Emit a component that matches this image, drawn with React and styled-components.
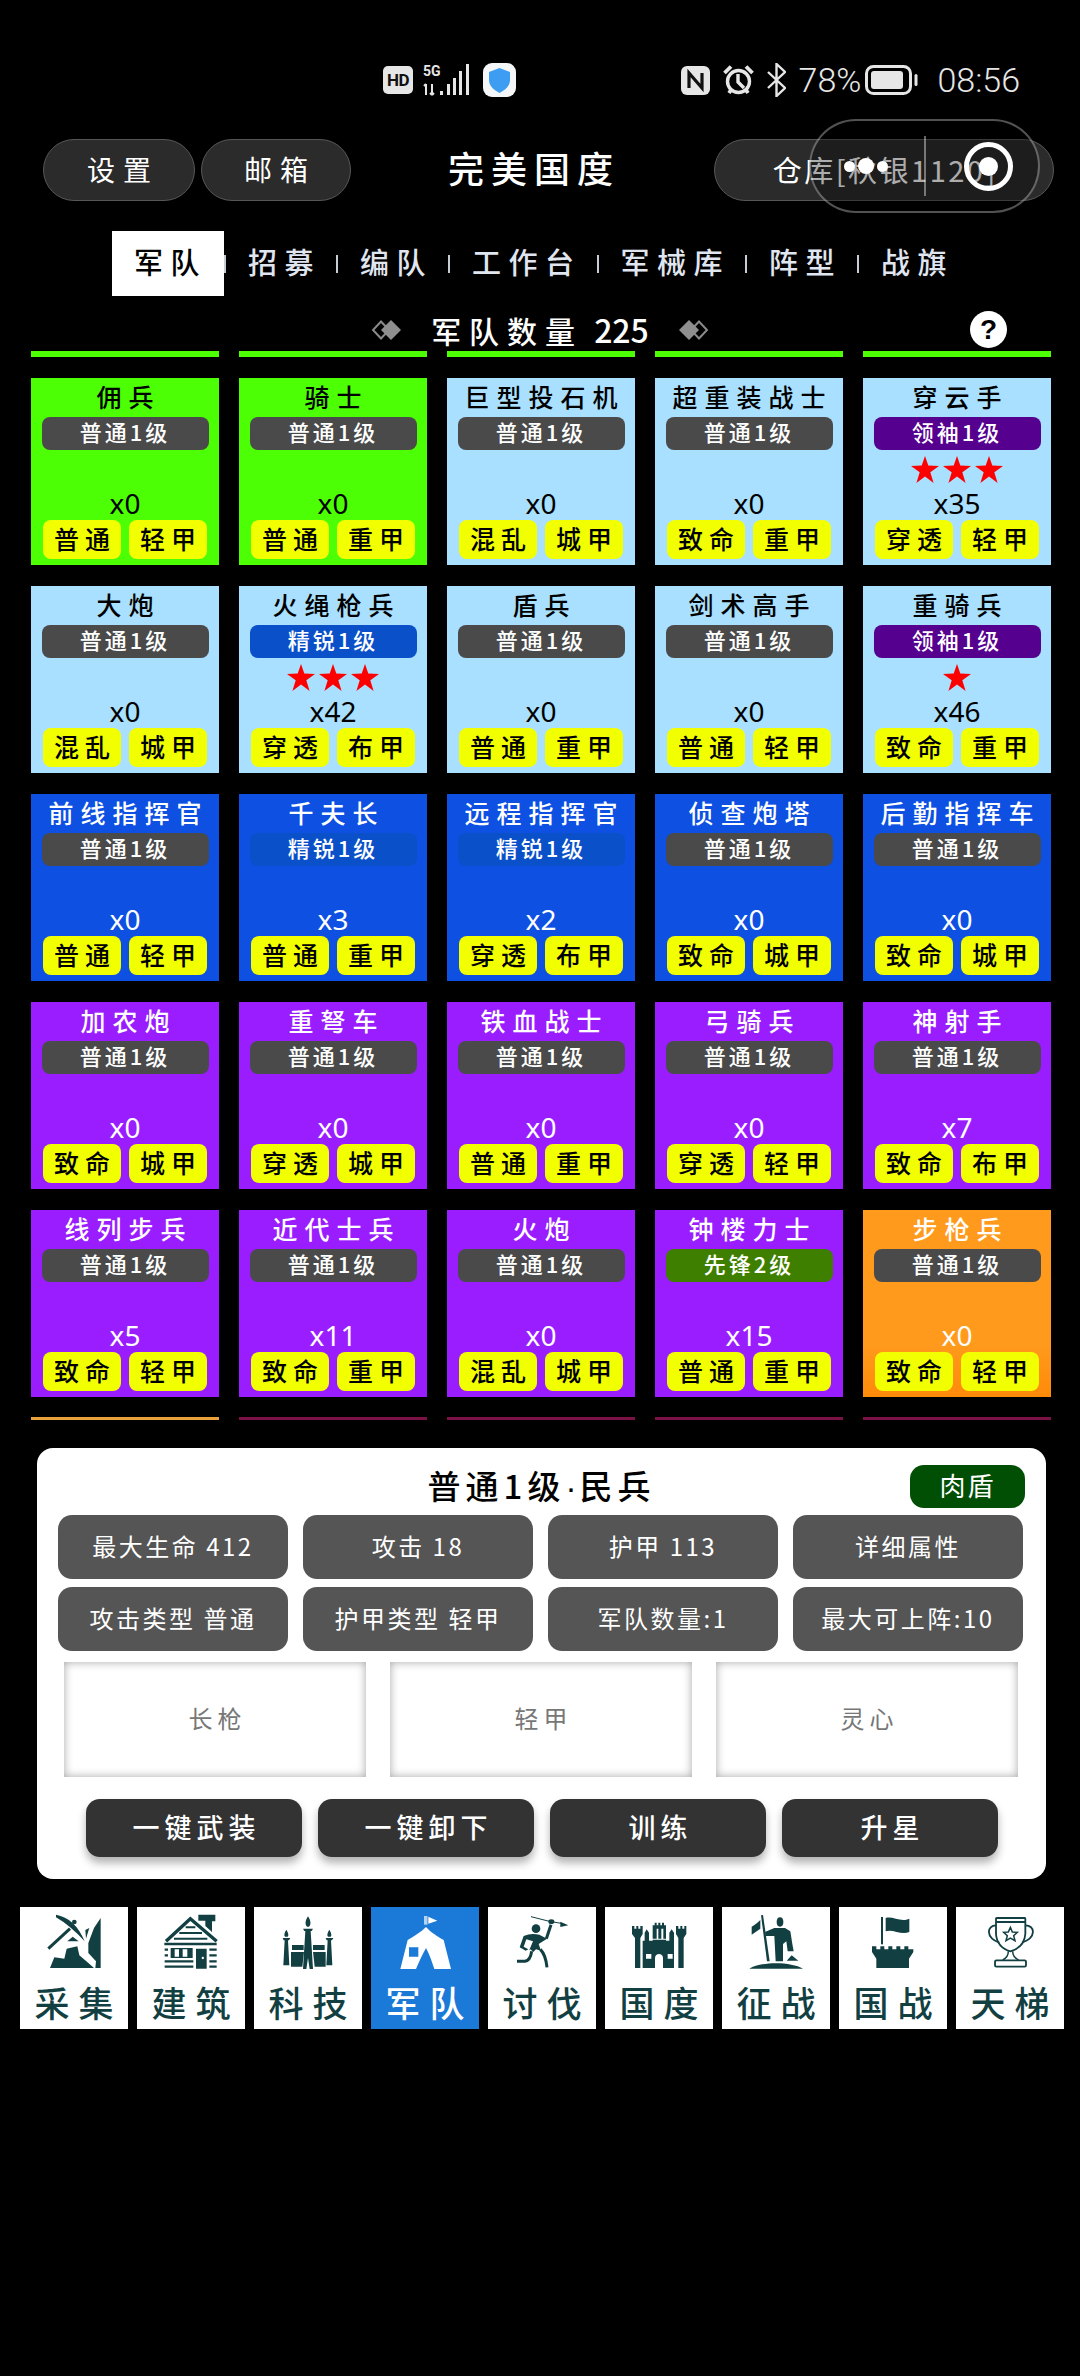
import React from 'react';
import styled, { createGlobalStyle } from 'styled-components';

const GlobalStyle = createGlobalStyle`
  html, body {
    margin: 0;
    padding: 0;
    background: #000;
  }
  body {
    font-family: "Noto Sans CJK SC", "Noto Sans", sans-serif;
    color: #fff;
  }
  * { box-sizing: border-box; }
`;

const Page = styled.div`
  position: relative;
  width: 1080px;
  height: 2376px;
  padding-top: 60px;
  overflow: hidden;
  background: #000;
`;

/* ---------- status bar ---------- */

const StatusBar = styled.div`
  display: flex;
  align-items: center;
  justify-content: space-between;
  height: 40px;
  padding: 0 60px 0 383px;
  color: #e6e6e6;
`;

const StatusGroup = styled.div`
  display: flex;
  align-items: center;
  gap: ${(p) => p.$gap || 10}px;
`;

const HdBadge = styled.span`
  display: flex;
  align-items: center;
  justify-content: center;
  width: 30px;
  height: 28px;
  border-radius: 5px;
  background: #e6e6e6;
  color: #111;
  font-family: Roboto, sans-serif;
  font-size: 17px;
  font-weight: 700;
  letter-spacing: -0.5px;
`;

const StatusText = styled.span`
  font-family: Roboto, sans-serif;
  font-size: 34px;
  line-height: 40px;
  font-weight: 300;
  margin-left: ${(p) => p.$shift || 0}px;
`;

const BatteryIcon = styled.svg`
  margin-left: -9px;
`;

/* ---------- header ---------- */

const Header = styled.div`
  display: flex;
  align-items: center;
  margin-top: 39px;
  padding: 0 26px 0 43px;
  gap: 6px;
`;

const PillButton = styled.div`
  display: flex;
  align-items: center;
  justify-content: center;
  width: ${(p) => p.$width}px;
  height: 62px;
  padding: 0 0 3px ${(p) => p.$spacing ?? 8}px;
  border-radius: 31px;
  background: #2b2b2b;
  border: 1.5px solid #575757;
  font-size: ${(p) => p.$size || 28}px;
  letter-spacing: ${(p) => p.$spacing ?? 8}px;
  white-space: nowrap;
`;

const GameTitle = styled.div`
  margin: 0 0 7px 91px;
  font-size: 36px;
  font-weight: 500;
  letter-spacing: 7px;
  white-space: nowrap;
`;

const HeaderSpacer = styled.div`
  flex: 1;
`;

/* floating assistant capsule that sits above the app */
const FloatCapsule = styled.div`
  position: absolute;
  left: 809px;
  top: 119px;
  width: 231px;
  height: 94px;
  border-radius: 47px;
  background: rgba(0, 0, 0, 0.32);
  border: 2.5px solid rgba(255, 255, 255, 0.32);
  display: flex;
  align-items: center;
`;

const CapsuleDots = styled.div`
  width: 113px;
  display: flex;
  align-items: center;
  justify-content: center;
  gap: 3px;
  padding-right: 4px;
`;

const CapsuleDot = styled.i`
  display: block;
  width: ${(p) => p.$size}px;
  height: ${(p) => p.$size}px;
  border-radius: 50%;
  background: #fff;
`;

const CapsuleDivider = styled.div`
  width: 2px;
  height: 60px;
  background: rgba(255, 255, 255, 0.4);
`;

const CapsuleRing = styled.div`
  margin-left: 38px;
  width: 49px;
  height: 49px;
  border-radius: 50%;
  border: 5px solid #fff;
  display: flex;
  align-items: center;
  justify-content: center;
  &::before {
    content: '';
    width: 19px;
    height: 19px;
    border-radius: 50%;
    background: #fff;
  }
`;

/* ---------- tabs ---------- */

const TabRow = styled.div`
  display: flex;
  align-items: center;
  margin-top: 30px;
  padding-left: 112px;
  height: 65px;
`;

const Tab = styled.div`
  display: flex;
  align-items: center;
  height: 65px;
  padding: 0 ${(p) => (p.$active ? 17 : 15)}px 6px 22px;
  background: ${(p) => (p.$active ? '#fff' : 'transparent')};
  color: ${(p) => (p.$active ? '#000' : '#e0e6f0')};
  font-size: 29px;
  font-weight: 500;
  letter-spacing: 7.5px;
  white-space: nowrap;
`;

const TabDivider = styled.div`
  width: 2px;
  height: 18px;
  background: #c8ccd4;
`;

/* ---------- troop count row ---------- */

const CountRow = styled.div`
  display: grid;
  grid-template-columns: 1fr auto 1fr;
  align-items: center;
  margin-top: 15px;
  height: 36px;
`;

const CountCenter = styled.div`
  display: flex;
  align-items: center;
  grid-column: 2;
  gap: 29px;
  height: 36px;
`;

const CountLabel = styled.div`
  font-size: 30px;
  line-height: 36px;
  font-weight: 500;
  letter-spacing: 8px;
  white-space: nowrap;
  span {
    font-size: 32px;
    letter-spacing: 0;
    margin-left: 11px;
  }
`;

const HelpButton = styled.div`
  justify-self: end;
  margin-right: 73px;
  width: 37px;
  height: 37px;
  border-radius: 50%;
  background: #fff;
  color: #000;
  font-family: "Liberation Sans", sans-serif;
  font-size: 28px;
  font-weight: 700;
  line-height: 37px;
  text-align: center;
`;

/* ---------- troop grid ---------- */

const SliverRow = styled.div`
  display: grid;
  grid-template-columns: repeat(5, 188px);
  column-gap: 20px;
  padding-left: 31px;
  margin-top: ${(p) => p.$top}px;
`;

const Sliver = styled.div`
  height: ${(p) => p.$height}px;
  background: ${(p) => p.$color};
`;

const TroopGrid = styled.div`
  display: grid;
  grid-template-columns: repeat(5, 188px);
  grid-auto-rows: 187px;
  gap: 21px 20px;
  padding-left: 31px;
  margin-top: 21px;
`;

const tones = {
  green: { bg: '#4cff05', fg: '#000' },
  sky: { bg: '#a9e0ff', fg: '#000' },
  blue: { bg: '#0d50e2', fg: '#fff' },
  purple: { bg: '#9a1dff', fg: '#fff' },
  orange: { bg: 'linear-gradient(#ff9a1c 0%, #ff9a1c 72%, #ff8a0a 100%)', fg: '#fff' },
};

const Card = styled.div`
  display: flex;
  flex-direction: column;
  align-items: center;
  padding: 0 11px 6px;
  background: ${(p) => tones[p.$tone].bg};
  color: ${(p) => tones[p.$tone].fg};
`;

const CardName = styled.div`
  height: 39px;
  padding-left: 7px;
  font-size: 25px;
  line-height: 37px;
  font-weight: 500;
  letter-spacing: 7px;
  white-space: nowrap;
`;

const rankColors = {
  普通: '#4a4a4a',
  精锐: '#0a50c9',
  领袖: '#55008f',
  先锋: '#3f7f00',
};

const RankBadge = styled.div`
  width: 167px;
  height: 33px;
  flex: none;
  border-radius: 8px;
  background: ${(p) => rankColors[p.$rank]};
  color: #fff;
  font-size: 22px;
  line-height: 29px;
  font-weight: 500;
  letter-spacing: 3px;
  text-align: center;
  white-space: nowrap;
`;

const StarRow = styled.div`
  display: flex;
  align-items: center;
  justify-content: center;
  gap: 4px;
  height: 38px;
  flex: none;
`;

const Quantity = styled.div`
  height: 32px;
  flex: none;
  font-family: "Noto Sans", sans-serif;
  font-size: 28px;
  line-height: 30px;
`;

const TagRow = styled.div`
  display: flex;
  gap: 8px;
  margin-top: auto;
`;

const Tag = styled.div`
  width: 78px;
  height: 39px;
  border-radius: 8px;
  background: #f2ff00;
  color: #000;
  padding-left: 6px;
  font-size: 25px;
  line-height: 36px;
  font-weight: 500;
  letter-spacing: 6px;
  text-align: center;
  white-space: nowrap;
`;

const Star = () => (
  <svg width="28" height="27" viewBox="0 0 28 27">
    <polygon fill="#ff0000" points="14,0 17.3,9.6 28,9.9 19.3,16.2 22.6,27 14,20.5 5.4,27 8.7,16.2 0,9.9 10.7,9.6" />
  </svg>
);

/* ---------- detail panel ---------- */

const Panel = styled.div`
  width: 1009px;
  height: 431px;
  margin: 28px 0 0 37px;
  padding-top: 17px;
  border-radius: 16px;
  background: #fff;
`;

const PanelTitleRow = styled.div`
  display: grid;
  grid-template-columns: 1fr auto 1fr;
  align-items: center;
  padding: 0 21px;
  height: 43px;
`;

const PanelTitle = styled.div`
  grid-column: 2;
  color: #000;
  font-size: 33px;
  line-height: 38px;
  font-weight: 500;
  letter-spacing: 5px;
  white-space: nowrap;
  span {
    font-family: "Liberation Sans", sans-serif;
    letter-spacing: 3px;
  }
`;

const RoleTag = styled.div`
  justify-self: end;
  width: 115px;
  height: 43px;
  border-radius: 14px;
  background: #014f05;
  color: #fff;
  font-size: 26px;
  line-height: 39px;
  letter-spacing: 2px;
  text-align: center;
`;

const StatGrid = styled.div`
  display: grid;
  grid-template-columns: repeat(4, 230px);
  grid-auto-rows: 64px;
  gap: 8px 15px;
  margin: 7px 0 0 21px;
`;

const StatButton = styled.div`
  display: flex;
  align-items: center;
  justify-content: center;
  padding-bottom: 3px;
  border-radius: 14px;
  background: #555;
  color: #fff;
  font-size: 24px;
  letter-spacing: 2.5px;
  white-space: nowrap;
`;

const EquipRow = styled.div`
  display: grid;
  grid-template-columns: repeat(3, 302px);
  gap: 24px;
  margin: 11px 0 0 27px;
`;

const EquipSlot = styled.div`
  display: flex;
  align-items: center;
  justify-content: center;
  height: 115px;
  padding: 0 0 4px 5px;
  background: #fff;
  box-shadow: inset 0 0 10px rgba(0, 0, 0, 0.35);
  color: #777;
  font-size: 24px;
  letter-spacing: 5px;
`;

const ActionRow = styled.div`
  display: grid;
  grid-template-columns: repeat(4, 216px);
  gap: 16px;
  margin: 22px 0 0 49px;
`;

const ActionButton = styled.div`
  display: flex;
  align-items: center;
  justify-content: center;
  height: 58px;
  padding: 0 0 4px 5px;
  border-radius: 14px;
  background: #333;
  color: #fff;
  font-size: 27px;
  font-weight: 500;
  letter-spacing: 5px;
  box-shadow: 0 6px 9px rgba(0, 0, 0, 0.3);
`;

/* ---------- bottom nav ---------- */

const BottomNav = styled.div`
  display: grid;
  grid-template-columns: repeat(9, 108px);
  gap: 9px;
  margin-top: 28px;
  padding-left: 20px;
`;

const NavItem = styled.div`
  height: 122px;
  padding-top: 1px;
  background: ${(p) => (p.$active ? '#1b79d8' : '#fff')};
  color: ${(p) => (p.$active ? '#fff' : '#123f42')};
  svg {
    display: block;
  }
`;

const NavLabel = styled.div`
  height: 54px;
  margin-top: 1px;
  padding-left: 9px;
  font-size: 35px;
  line-height: 54px;
  font-weight: 500;
  letter-spacing: 9px;
  text-align: center;
  white-space: nowrap;
`;

/* ---------- drawings ---------- */

const DiamondPair = ({ flip }) => (
  <svg width="31" height="20" viewBox="0 0 31 20" style={flip ? { transform: 'scaleX(-1)' } : undefined}>
    <polygon points="10,1.5 18,10 10,18.5 2,10" fill="none" stroke="#8a8a8a" strokeWidth="2" />
    <polygon points="20,0 30,10 20,20 10,10" fill="#8f8f8f" />
  </svg>
);

const NetworkIcon = () => (
  <svg width="50" height="32" viewBox="0 0 50 32">
    <text x="0" y="12" fontFamily="Roboto, sans-serif" fontSize="14" fontWeight="700" fill="#e6e6e6">5G</text>
    <path d="M3 20 V31 M1 22 L3 20 M9 20 V31 M9 31 L11 29 M7 29 L9 31" stroke="#e6e6e6" strokeWidth="2" fill="none" />
    <rect x="17" y="27" width="3" height="4" fill="#e6e6e6" />
    <rect x="24" y="20" width="3" height="11" fill="#e6e6e6" />
    <rect x="30" y="14" width="3" height="17" fill="#e6e6e6" />
    <rect x="36" y="7" width="3" height="24" fill="#e6e6e6" />
    <rect x="43" y="0" width="3" height="31" fill="#e6e6e6" />
  </svg>
);

const ShieldIcon = () => (
  <svg width="33" height="34" viewBox="0 0 33 34">
    <rect width="33" height="34" rx="9" fill="#f4f6f8" />
    <path d="M16.5 5 L27 9 V17 C27 23 22 27 16.5 30 C11 27 6 23 6 17 V9 Z" fill="#3d9df3" />
  </svg>
);

const NfcIcon = () => (
  <svg width="29" height="29" viewBox="0 0 29 29">
    <rect width="29" height="29" rx="6" fill="#e6e6e6" />
    <path d="M8 22 V7 L21 22 V7" fill="none" stroke="#111" strokeWidth="3.2" />
  </svg>
);

const AlarmIcon = () => (
  <svg width="31" height="31" viewBox="0 0 31 31" fill="none" stroke="#e6e6e6">
    <circle cx="15.5" cy="16.5" r="11" strokeWidth="3.4" />
    <path d="M15 9 V17 L21 23" strokeWidth="3.4" />
    <path d="M1.5 8 L8 1.5 M29.5 8 L23 1.5 M6 28 L8 25 M25 28 L23 25" strokeWidth="3.8" />
  </svg>
);

const BluetoothIcon = () => (
  <svg width="19" height="34" viewBox="0 0 19 34" fill="none" stroke="#e6e6e6" strokeWidth="2.4">
    <path d="M1 9 L18 25 L9.5 33 V1 L18 9 L1 25" />
  </svg>
);

const BatteryGlyph = () => (
  <BatteryIcon width="53" height="30" viewBox="0 0 53 30">
    <rect x="1.5" y="1.5" width="44" height="27" rx="7" fill="none" stroke="#e6e6e6" strokeWidth="3" />
    <rect x="6" y="6" width="32" height="18" rx="3" fill="#e6e6e6" />
    <rect x="49.5" y="9" width="3" height="12" rx="1.5" fill="#e6e6e6" />
  </BatteryIcon>
);

// every nav drawing lives in a shared 324x198 space, offset per cell
const NavIcon = ({ x, children }) => (
  <svg width="108" height="66" viewBox={`${x} 0 324 198`} fill="currentColor">
    {children}
  </svg>
);

const MiningIcon = () => (
  <NavIcon x={0}>
    <path d="M90 180 L103 148 L133 152 L140 122 L172 115 L178 142 L205 165 L222 180 Z" />
    <path d="M242 30 L242 180 L226 180 L228 160 L205 135 L205 105 L222 60 Z" />
    <path d="M85 122 L150 62" stroke="currentColor" strokeWidth="9" />
    <path d="M108 20 Q165 30 194 100 Q150 52 108 28 Z" />
    <circle cx="163" cy="42" r="7" />
    <path d="M196 66 L208 60 L198 92 Z" />
    <path d="M142 100 L158 86 L176 100 Z" />
  </NavIcon>
);

const CabinIcon = () => (
  <NavIcon x={351}>
    <path d="M535 20 H586 V40 H576 V72 L556 54 V38 H535 Z" />
    <path d="M438 100 L511 32 L590 100" fill="none" stroke="currentColor" strokeWidth="10" />
    <path d="M497 58 H526 M478 75 H546 M462 92 H562" stroke="currentColor" strokeWidth="6" />
    <path d="M433 108 H590 M434 125 H444 M434 142 H444 M434 160 H520 M434 176 H520 M568 125 H590 M568 142 H590 M568 160 H590 M568 176 H590" stroke="currentColor" strokeWidth="7" />
    <path d="M452 120 H518 V150 H452 Z M464 124 V146 H477 V124 Z M488 124 V146 H502 V124 Z" fillRule="evenodd" />
    <path d="M528 122 H560 V182 H528 Z M545 150 a3.5 3.5 0 1 0 7 0 a3.5 3.5 0 1 0 -7 0 Z" fillRule="evenodd" />
  </NavIcon>
);

const ScienceIcon = () => (
  <NavIcon x={701}>
    <path d="M863 25 C871 36 873 50 866 56 H860 C853 50 855 36 863 25 Z" />
    <path d="M848 62 H878 L874 69 H871 L878 183 H868 L863 150 L858 183 H848 L855 69 H852 Z" />
    <path d="M798 65 C804 74 806 82 802 86 H794 C790 82 792 74 798 65 Z" />
    <path d="M787 90 H810 L806 97 H803 L807 172 H789 L793 97 H790 Z" />
    <path d="M927 65 C933 74 935 82 931 86 H923 C919 82 921 74 927 65 Z" />
    <path d="M916 90 H939 L935 97 H932 L936 172 H918 L922 97 H919 Z" />
    <path d="M815 111 H850 V126 H815 Z M812 132 H851 L846 176 H812 Z" />
    <path d="M878 111 H913 V126 H878 Z M878 132 H916 V176 H883 Z" />
  </NavIcon>
);

const TentIcon = () => (
  <NavIcon x={0}>
    <rect x="160" y="24" width="4" height="26" />
    <rect x="166" y="24" width="3" height="26" />
    <path d="M172 26 L199 38 L172 47 Z" />
    <path d="M165 57 C150 72 128 86 110 96 L88 183 H135 C145 160 155 138 165 120 C175 138 182 160 190 183 H240 L218 96 C200 86 178 72 165 57 Z M114 118 V146 H142 V118 Z" fillRule="evenodd" />
  </NavIcon>
);

const WarriorIcon = () => (
  <NavIcon x={351}>
    <path d="M480 26 L535 40 M548 42 L570 46" stroke="currentColor" strokeWidth="3" />
    <ellipse cx="541" cy="41" rx="9" ry="7" />
    <path d="M568 41 L592 52 L568 57 Z" />
    <circle cx="495" cy="62" r="13" />
    <path d="M526 92 L540 50" stroke="currentColor" strokeWidth="9" />
    <path d="M458 84 Q480 74 505 80 L528 92 L503 108 L510 128 L495 124 L487 132 L478 124 L474 128 L486 100 L466 94 L458 116 L472 124 L464 128 L446 118 Z" />
    <path d="M508 124 Q524 140 528 178 M482 130 Q478 158 462 160 L438 160" fill="none" stroke="currentColor" strokeWidth="9" />
  </NavIcon>
);

const CastleIcon = () => (
  <NavIcon x={702}>
    <path d="M783 54 H790 V62 H796 V54 H802 V62 H808 V54 H815 V78 L808 90 V180 H792 V90 L783 78 Z" />
    <path d="M915 54 H922 V62 H928 V54 H934 V62 H940 V54 H946 V78 L938 90 V180 H922 V90 L915 78 Z" />
    <path d="M845 52 H851 V44 H857 V52 H862 V44 H868 V52 H873 V44 H879 V52 H885 V92 H877 V62 H871 V92 H862 V62 H857 V92 H845 Z" />
    <path d="M821 74 L827 64 L834 74 V98 H845 V95 H885 V98 H895 V74 L902 64 L909 74 V180 H815 V98 H821 Z M825 138 V152 H841 V138 Z M890 138 V152 H905 V138 Z M852 180 H876 V150 C876 134 852 134 852 150 Z" fillRule="evenodd" />
  </NavIcon>
);

const ConquestIcon = () => (
  <NavIcon x={3}>
    <path d="M120 22 L126 21 L146 160 L138 160 Z" />
    <path d="M118 36 L118 62 L92 80 L92 56 C100 52 108 46 118 36 Z" />
    <ellipse cx="177" cy="42" rx="10" ry="14" />
    <path d="M132 72 L160 60 H192 L208 70 L214 108 L218 130 L200 130 L196 100 L186 108 L186 160 H164 L160 84 L134 84 Z" />
    <path d="M197 158 L212 142 L232 158 Z" />
    <path d="M85 182 C120 160 210 160 246 182 Z" />
  </NavIcon>
);

const FlagTowerIcon = () => (
  <NavIcon x={354}>
    <rect x="480" y="27" width="6" height="82" />
    <path d="M494 30 C515 24 540 44 565 32 V72 C540 82 515 62 494 70 Z" />
    <path d="M453 115 H466 V124 H478 V115 H490 V124 H502 V115 H514 V124 H526 V115 H538 V124 H550 V115 H562 V124 H577 V115 V132 L564 152 V180 H466 V152 L453 132 Z" />
  </NavIcon>
);

const TrophyIcon = () => (
  <NavIcon x={705}>
    <g fill="none" stroke="currentColor" strokeWidth="5.5">
      <rect x="825" y="30" width="88" height="12" rx="2" />
      <path d="M825 42 V78 Q828 118 868 130 Q910 118 913 78 V42" />
      <path d="M825 52 C798 52 792 88 835 104 M913 52 C942 52 948 88 903 104" />
      <path d="M868 58 L874 72 L889 73 L878 83 L882 98 L868 90 L855 98 L859 83 L848 73 L862 72 Z" strokeWidth="4.5" />
      <path d="M862 130 C862 142 858 150 845 156 M875 130 C875 142 880 150 893 156" strokeWidth="4.5" />
      <rect x="822" y="157" width="93" height="19" rx="4" />
    </g>
  </NavIcon>
);

/* ---------- data ---------- */

const troops = [
  ['佣兵', '普通', 1, 0, 0, '普通', '轻甲', 'green'],
  ['骑士', '普通', 1, 0, 0, '普通', '重甲', 'green'],
  ['巨型投石机', '普通', 1, 0, 0, '混乱', '城甲', 'sky'],
  ['超重装战士', '普通', 1, 0, 0, '致命', '重甲', 'sky'],
  ['穿云手', '领袖', 1, 3, 35, '穿透', '轻甲', 'sky'],
  ['大炮', '普通', 1, 0, 0, '混乱', '城甲', 'sky'],
  ['火绳枪兵', '精锐', 1, 3, 42, '穿透', '布甲', 'sky'],
  ['盾兵', '普通', 1, 0, 0, '普通', '重甲', 'sky'],
  ['剑术高手', '普通', 1, 0, 0, '普通', '轻甲', 'sky'],
  ['重骑兵', '领袖', 1, 1, 46, '致命', '重甲', 'sky'],
  ['前线指挥官', '普通', 1, 0, 0, '普通', '轻甲', 'blue'],
  ['千夫长', '精锐', 1, 0, 3, '普通', '重甲', 'blue'],
  ['远程指挥官', '精锐', 1, 0, 2, '穿透', '布甲', 'blue'],
  ['侦查炮塔', '普通', 1, 0, 0, '致命', '城甲', 'blue'],
  ['后勤指挥车', '普通', 1, 0, 0, '致命', '城甲', 'blue'],
  ['加农炮', '普通', 1, 0, 0, '致命', '城甲', 'purple'],
  ['重弩车', '普通', 1, 0, 0, '穿透', '城甲', 'purple'],
  ['铁血战士', '普通', 1, 0, 0, '普通', '重甲', 'purple'],
  ['弓骑兵', '普通', 1, 0, 0, '穿透', '轻甲', 'purple'],
  ['神射手', '普通', 1, 0, 7, '致命', '布甲', 'purple'],
  ['线列步兵', '普通', 1, 0, 5, '致命', '轻甲', 'purple'],
  ['近代士兵', '普通', 1, 0, 11, '致命', '重甲', 'purple'],
  ['火炮', '普通', 1, 0, 0, '混乱', '城甲', 'purple'],
  ['钟楼力士', '先锋', 2, 0, 15, '普通', '重甲', 'purple'],
  ['步枪兵', '普通', 1, 0, 0, '致命', '轻甲', 'orange'],
];

const tabs = ['军队', '招募', '编队', '工作台', '军械库', '阵型', '战旗'];

const stats = [
  '最大生命 412', '攻击 18', '护甲 113', '详细属性',
  '攻击类型 普通', '护甲类型 轻甲', '军队数量:1', '最大可上阵:10',
];

const navItems = [
  ['采集', MiningIcon],
  ['建筑', CabinIcon],
  ['科技', ScienceIcon],
  ['军队', TentIcon],
  ['讨伐', WarriorIcon],
  ['国度', CastleIcon],
  ['征战', ConquestIcon],
  ['国战', FlagTowerIcon],
  ['天梯', TrophyIcon],
];

const lowerSlivers = ['#e8a23a', '#7c1145', '#7c1145', '#7c1145', '#7c1145'];

const App = () => (
  <Page>
    <GlobalStyle />

    <StatusBar>
      <StatusGroup $gap={10}>
        <HdBadge>HD</HdBadge>
        <NetworkIcon />
        <ShieldIcon />
      </StatusGroup>
      <StatusGroup $gap={13}>
        <NfcIcon />
        <AlarmIcon />
        <BluetoothIcon />
        <StatusText>78%</StatusText>
        <BatteryGlyph />
        <StatusText $shift={6}>08:56</StatusText>
      </StatusGroup>
    </StatusBar>

    <Header>
      <PillButton $width={152}>设置</PillButton>
      <PillButton $width={150}>邮箱</PillButton>
      <GameTitle>完美国度</GameTitle>
      <HeaderSpacer />
      <PillButton $width={340} $size={29} $spacing={2.5}>仓库[秋银1120]</PillButton>
    </Header>

    <FloatCapsule>
      <CapsuleDots>
        <CapsuleDot $size={11} />
        <CapsuleDot $size={16} />
        <CapsuleDot $size={11} />
      </CapsuleDots>
      <CapsuleDivider />
      <CapsuleRing />
    </FloatCapsule>

    <TabRow>
      {tabs.map((tab, index) => (
        <React.Fragment key={tab}>
          <Tab $active={index === 0}>{tab}</Tab>
          {index < tabs.length - 1 && <TabDivider />}
        </React.Fragment>
      ))}
    </TabRow>

    <CountRow>
      <CountCenter>
        <DiamondPair />
        <CountLabel>军队数量<span>225</span></CountLabel>
        <DiamondPair flip />
      </CountCenter>
      <HelpButton>?</HelpButton>
    </CountRow>

    <SliverRow $top={4}>
      {[0, 1, 2, 3, 4].map((i) => <Sliver key={i} $height={6} $color="#4cff05" />)}
    </SliverRow>

    <TroopGrid>
      {troops.map(([name, rank, level, stars, count, attack, armor, tone]) => (
        <Card key={name} $tone={tone}>
          <CardName>{name}</CardName>
          <RankBadge $rank={rank}>{rank}{level}级</RankBadge>
          <StarRow>
            {Array.from({ length: stars }, (_, i) => <Star key={i} />)}
          </StarRow>
          <Quantity>x{count}</Quantity>
          <TagRow>
            <Tag>{attack}</Tag>
            <Tag>{armor}</Tag>
          </TagRow>
        </Card>
      ))}
    </TroopGrid>

    <SliverRow $top={20}>
      {lowerSlivers.map((color, i) => <Sliver key={i} $height={3} $color={color} />)}
    </SliverRow>

    <Panel>
      <PanelTitleRow>
        <PanelTitle>普通1级<span>·</span>民兵</PanelTitle>
        <RoleTag>肉盾</RoleTag>
      </PanelTitleRow>
      <StatGrid>
        {stats.map((stat) => <StatButton key={stat}>{stat}</StatButton>)}
      </StatGrid>
      <EquipRow>
        <EquipSlot>长枪</EquipSlot>
        <EquipSlot>轻甲</EquipSlot>
        <EquipSlot>灵心</EquipSlot>
      </EquipRow>
      <ActionRow>
        <ActionButton>一键武装</ActionButton>
        <ActionButton>一键卸下</ActionButton>
        <ActionButton>训练</ActionButton>
        <ActionButton>升星</ActionButton>
      </ActionRow>
    </Panel>

    <BottomNav>
      {navItems.map(([label, Icon]) => (
        <NavItem key={label} $active={label === '军队'}>
          <Icon />
          <NavLabel>{label}</NavLabel>
        </NavItem>
      ))}
    </BottomNav>
  </Page>
);

export default App;
